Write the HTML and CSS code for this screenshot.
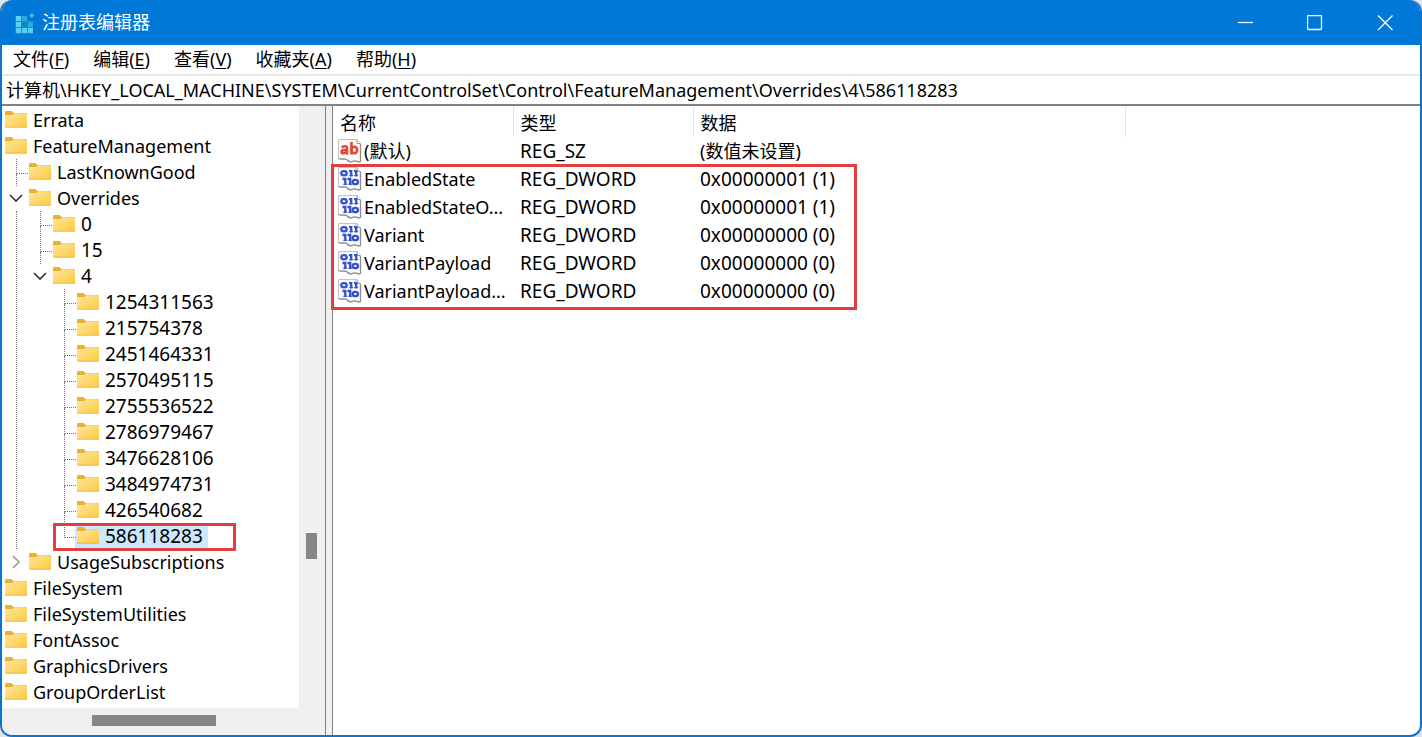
FILE: index.html
```html
<!DOCTYPE html>
<html lang="zh-CN">
<head>
<meta charset="utf-8">
<title>注册表编辑器</title>
<link rel="stylesheet" href="styles.css">
</head>
<body>
<svg class="defs" aria-hidden="true">
  <defs>
    <linearGradient id="folder-fill" x1="0" y1="0" x2="1" y2="1">
      <stop offset="0" stop-color="#ffe69c"/>
      <stop offset="1" stop-color="#fccb44"/>
    </linearGradient>
    <symbol id="folder" viewBox="0 0 22 18">
      <path d="M0 1Q0 0 1 0H6.500L8.500 2H22V8H0Z" fill="#e8b22c"/>
      <path d="M0 4H7.500L9 2.300H22V15.500Q22 16 21.500 16H.5Q0 16 0 15.500Z" fill="url(#folder-fill)"/>
      <path d="M0 16.200H22" stroke="#e5ae36" stroke-width=".9"/>
    </symbol>
    <symbol id="sheet" viewBox="0 0 24 24">
      <path d="M.5 .5H19L22.500 4.500V22.500C20 24 18 21 15.500 22C12.500 24 10.500 22.500 8.500 20.500C6 19 4 21 .5 19.500Z" fill="#fbfbfb" stroke="#c4c4c4" stroke-width="1"/>
      <path d="M.5 19.500C4 21 6 19 8.500 20.500C10.500 22.500 12.500 24 15.500 22C18 21 20 24 22.500 22.500V5" fill="none" stroke="#8d8d8d" stroke-width="1.300"/>
      <path d="M19 .5V4.500H22.500" fill="#eee" stroke="#999" stroke-width="1"/>
    </symbol>
    <symbol id="string-value" viewBox="0 0 24 24">
      <use href="#sheet"/>
      <g fill="none" stroke="#e0492f" stroke-width="2.600">
        <path d="M3.500 8.300Q9 5.800 9 9.500V15.500M9 11H6Q3.500 11.200 3.500 12.900Q3.800 14.600 6 14.300Q8.500 13.900 9 12"/>
        <path d="M13.500 3V15.500"/>
        <ellipse cx="16.300" cy="11" rx="2.900" ry="3.300"/>
      </g>
    </symbol>
    <symbol id="binary-value" viewBox="0 0 24 24">
      <use href="#sheet"/>
      <g fill="none" stroke="#3450cf" stroke-width="2.300">
        <ellipse cx="6" cy="6.200" rx="2.700" ry="2.100"/>
        <path d="M11 4.200H13.200V9.500M16 4.200H18.200V9.500M4.500 12H7.300V18M9.500 12H12.200V18"/>
        <ellipse cx="17.300" cy="15" rx="2.700" ry="2.200"/>
      </g>
      <path d="M11.200 8.600H15.200M16.200 8.600H20.200M5.200 17.200H9.300M10.200 17.200H14" stroke="#3450cf" stroke-width="1"/>
    </symbol>
  </defs>
</svg>

<div class="window">
  <header class="titlebar">
    <svg class="app-icon" viewBox="0 0 22 22" aria-hidden="true">
      <path d="M3 4H15V9H21V22H3Z" fill="#1290cf"/>
      <path d="M4 4h5v5H4zM4 10h5v5H4zM4 16h5v5H4zM10 16h5v5h-5zM16 16h5v5h-5z" fill="#56d0f5"/>
      <path d="M10 4h5v5h-5zM16 10h5v5h-5z" fill="#25add9"/>
      <path d="M10 10h5v5h-5z" fill="#0d86ba"/>
      <path d="M20 1L22 3.500L20 6L17 3.500Z" fill="#55b8ef"/>
    </svg>
    <h1 class="title">注册表编辑器</h1>
    <div class="controls">
      <button class="control" type="button" aria-label="最小化"><svg viewBox="0 0 16 16"><path d="M1 7.500H16"/></svg></button>
      <button class="control" type="button" aria-label="最大化"><svg viewBox="0 0 16 16"><rect x=".5" y=".5" width="14" height="14" rx="1"/></svg></button>
      <button class="control" type="button" aria-label="关闭"><svg viewBox="0 0 16 16"><path d="M1 .5L15.500 15M15.500 .5L1 15"/></svg></button>
    </div>
  </header>

  <nav class="menubar" aria-label="菜单">
    <button type="button">文件(<u>F</u>)</button>
    <button type="button">编辑(<u>E</u>)</button>
    <button type="button">查看(<u>V</u>)</button>
    <button type="button">收藏夹(<u>A</u>)</button>
    <button type="button">帮助(<u>H</u>)</button>
  </nav>

  <input class="address" type="text" aria-label="地址" value="计算机\HKEY_LOCAL_MACHINE\SYSTEM\CurrentControlSet\Control\FeatureManagement\Overrides\4\586118283">

  <main class="panes">
    <aside class="tree-pane">
      <ul class="tree">
        <li><div class="row"><svg class="folder"><use href="#folder"/></svg><span class="label">Errata</span></div></li>
        <li><div class="row"><svg class="folder"><use href="#folder"/></svg><span class="label">FeatureManagement</span></div>
          <ul>
            <li><div class="row"><span class="branch"></span><svg class="folder"><use href="#folder"/></svg><span class="label">LastKnownGood</span></div></li>
            <li><div class="row"><button class="toggle" type="button" aria-label="折叠 Overrides"><svg viewBox="0 0 14 14"><path d="M1 4L7 10L13 4"/></svg></button><svg class="folder"><use href="#folder"/></svg><span class="label">Overrides</span></div>
              <ul class="nested lined numeric">
                <li><div class="row"><span class="branch"></span><svg class="folder"><use href="#folder"/></svg><span class="label">0</span></div></li>
                <li><div class="row"><span class="branch"></span><svg class="folder"><use href="#folder"/></svg><span class="label">15</span></div></li>
                <li><div class="row"><button class="toggle" type="button" aria-label="折叠 4"><svg viewBox="0 0 14 14"><path d="M1 4L7 10L13 4"/></svg></button><svg class="folder"><use href="#folder"/></svg><span class="label">4</span></div>
                  <ul class="nested">
                    <li><div class="row"><span class="branch"></span><svg class="folder"><use href="#folder"/></svg><span class="label">1254311563</span></div></li>
                    <li><div class="row"><span class="branch"></span><svg class="folder"><use href="#folder"/></svg><span class="label">215754378</span></div></li>
                    <li><div class="row"><span class="branch"></span><svg class="folder"><use href="#folder"/></svg><span class="label">2451464331</span></div></li>
                    <li><div class="row"><span class="branch"></span><svg class="folder"><use href="#folder"/></svg><span class="label">2570495115</span></div></li>
                    <li><div class="row"><span class="branch"></span><svg class="folder"><use href="#folder"/></svg><span class="label">2755536522</span></div></li>
                    <li><div class="row"><span class="branch"></span><svg class="folder"><use href="#folder"/></svg><span class="label">2786979467</span></div></li>
                    <li><div class="row"><span class="branch"></span><svg class="folder"><use href="#folder"/></svg><span class="label">3476628106</span></div></li>
                    <li><div class="row"><span class="branch"></span><svg class="folder"><use href="#folder"/></svg><span class="label">3484974731</span></div></li>
                    <li><div class="row"><span class="branch"></span><svg class="folder"><use href="#folder"/></svg><span class="label">426540682</span></div></li>
                    <li><div class="row selected"><span class="branch last"></span><svg class="folder"><use href="#folder"/></svg><span class="label">586118283</span><span class="mark key-mark"></span></div></li>
                  </ul>
                </li>
              </ul>
            </li>
            <li><div class="row"><button class="toggle closed" type="button" aria-label="展开 UsageSubscriptions"><svg viewBox="0 0 14 14"><path d="M4 1L10 7L4 13"/></svg></button><svg class="folder"><use href="#folder"/></svg><span class="label">UsageSubscriptions</span></div></li>
          </ul>
        </li>
        <li><div class="row"><svg class="folder"><use href="#folder"/></svg><span class="label">FileSystem</span></div></li>
        <li><div class="row"><svg class="folder"><use href="#folder"/></svg><span class="label">FileSystemUtilities</span></div></li>
        <li><div class="row"><svg class="folder"><use href="#folder"/></svg><span class="label">FontAssoc</span></div></li>
        <li><div class="row"><svg class="folder"><use href="#folder"/></svg><span class="label">GraphicsDrivers</span></div></li>
        <li><div class="row"><svg class="folder"><use href="#folder"/></svg><span class="label">GroupOrderList</span></div></li>
      </ul>
      <div class="scroll-y"><div class="thumb-y"></div></div>
      <div class="scroll-x"><div class="thumb-x"></div></div>
    </aside>
    <div class="splitter"></div>
    <section class="values-pane">
      <table class="values">
        <colgroup><col class="col-name"><col class="col-type"><col class="col-data"><col></colgroup>
        <thead><tr><th scope="col">名称</th><th scope="col">类型</th><th scope="col">数据</th><td></td></tr></thead>
        <tbody>
          <tr><td class="name"><div class="cell"><svg class="value-icon"><use href="#string-value"/></svg><span class="text">(默认)</span></div></td><td class="latin">REG_SZ</td><td>(数值未设置)</td></tr>
        </tbody>
        <tbody class="dwords">
          <tr><td class="name"><span class="mark values-mark"></span><div class="cell"><svg class="value-icon"><use href="#binary-value"/></svg><span class="text">EnabledState</span></div></td><td class="latin">REG_DWORD</td><td class="latin">0x00000001 (1)</td></tr>
          <tr><td class="name"><div class="cell"><svg class="value-icon"><use href="#binary-value"/></svg><span class="text">EnabledStateO...</span></div></td><td class="latin">REG_DWORD</td><td class="latin">0x00000001 (1)</td></tr>
          <tr><td class="name"><div class="cell"><svg class="value-icon"><use href="#binary-value"/></svg><span class="text">Variant</span></div></td><td class="latin">REG_DWORD</td><td class="latin">0x00000000 (0)</td></tr>
          <tr><td class="name"><div class="cell"><svg class="value-icon"><use href="#binary-value"/></svg><span class="text">VariantPayload</span></div></td><td class="latin">REG_DWORD</td><td class="latin">0x00000000 (0)</td></tr>
          <tr><td class="name"><div class="cell"><svg class="value-icon"><use href="#binary-value"/></svg><span class="text">VariantPayload...</span></div></td><td class="latin">REG_DWORD</td><td class="latin">0x00000000 (0)</td></tr>
        </tbody>
      </table>
    </section>
  </main>
</div>
</body>
</html>
```
FILE: styles.css
```css
* { box-sizing: border-box; }

body {
  margin: 0;
  background: #dfe2e6;
  color: #000;
  font: 18px/26px "Noto Sans", "Noto Sans CJK SC", sans-serif;
}

button, input { font: inherit; color: inherit; border: 0; padding: 0; background: none; }
ul { list-style: none; margin: 0; padding: 0; }

.defs { position: absolute; width: 0; height: 0; }

.window {
  display: flex;
  flex-direction: column;
  min-height: 100vh;
  border: 2px solid #0f74cb;
  border-top: 0;
  border-radius: 12px;
  overflow: hidden;
  background: #fff;
}

.titlebar {
  display: flex;
  align-items: center;
  height: 45px;
  padding-left: 10px;
  background: #0078d7;
  color: #fff;
}
.app-icon { width: 22px; height: 22px; margin-right: 8px; }
.title { margin: 0; flex: 1; padding-bottom: 2px; font-size: 18px; font-weight: 400; }
.controls { display: flex; }
.control { display: grid; place-items: center; width: 70px; height: 45px; }
.control svg { width: 16px; height: 16px; fill: none; stroke: #fff; stroke-width: 1.3; }

.menubar {
  display: flex;
  gap: 24px;
  height: 31px;
  padding: 0 11px 2px;
  border-bottom: 2px solid #e9e9e9;
}
.menubar u { text-underline-offset: 2px; }

.address {
  width: 100%;
  height: 28px;
  padding: 0 4px 2px;
  font-size: 18px;
}

.panes { display: flex; flex: 1; border-top: 2px solid #828282; }

.tree-pane {
  display: grid;
  grid-template: 1fr 27px / 1fr 26px;
  width: 324px;
  border-right: 1px solid #828282;
  background: #f0f0f0;
}
.tree { padding: 1px 0 0 3px; background: #fff; }
.row { display: flex; align-items: center; height: 26px; position: relative; }
.folder { width: 22px; height: 18px; margin-right: 6px; flex: none; }

.nested { padding-left: 24px; }
.lined { margin-left: 11px; padding-left: 12px; border-left: 1px dotted #777; }
.numeric { font-size: 19px; }

.branch { width: 24px; height: 26px; padding-left: 11px; }
.branch::before {
  content: "";
  display: block;
  width: 11px;
  height: 14px;
  border-left: 1px dotted #777;
  border-bottom: 1px dotted #777;
}
.branch::after {
  content: "";
  display: block;
  height: 12px;
  border-left: 1px dotted #777;
}
.last::after { display: none; }

.toggle { display: flex; align-items: center; width: 24px; height: 26px; padding-left: 4px; }
.toggle svg { width: 14px; height: 14px; fill: none; stroke: #333; stroke-width: 1.6; }
.closed svg { stroke: #999; }

.selected { width: max-content; padding-right: 5px; background: linear-gradient(#cce8ff, #cce8ff) 22px 0 no-repeat; }

.mark { position: absolute; border: 3px solid #e43d40; pointer-events: none; }
.key-mark { left: 0; right: -28px; top: 0; bottom: -2px; }

.scroll-y { padding: 427px 8px 0 7px; }
.thumb-y { height: 26px; background: #868686; }
.scroll-x { grid-column: 1 / 3; padding: 7px 109px 0 90px; }
.thumb-x { height: 11px; background: #868686; }

.splitter { width: 7px; background: #f0f0f0; border-right: 1px solid #828282; }

.values-pane { flex: 1; min-width: 0; }
.values { width: 100%; border-collapse: collapse; table-layout: fixed; }
.col-name { width: 180px; }
.col-type { width: 180px; }
.col-data { width: 432px; }
.values th, .values td { height: 28px; padding: 0 0 0 7px; text-align: left; font-weight: 400; white-space: nowrap; }
.values thead th { height: 31px; padding-top: 2px; border-right: 1px solid #e5e5e5; }
.values .name { padding-left: 5px; }
.values .latin { font-size: 19px; }
.cell { display: flex; align-items: center; gap: 2px; }
.value-icon { width: 24px; height: 24px; flex: none; }
.dwords { position: relative; }
.values-mark { left: -2px; top: -1px; width: 526px; bottom: -5px; }
```
